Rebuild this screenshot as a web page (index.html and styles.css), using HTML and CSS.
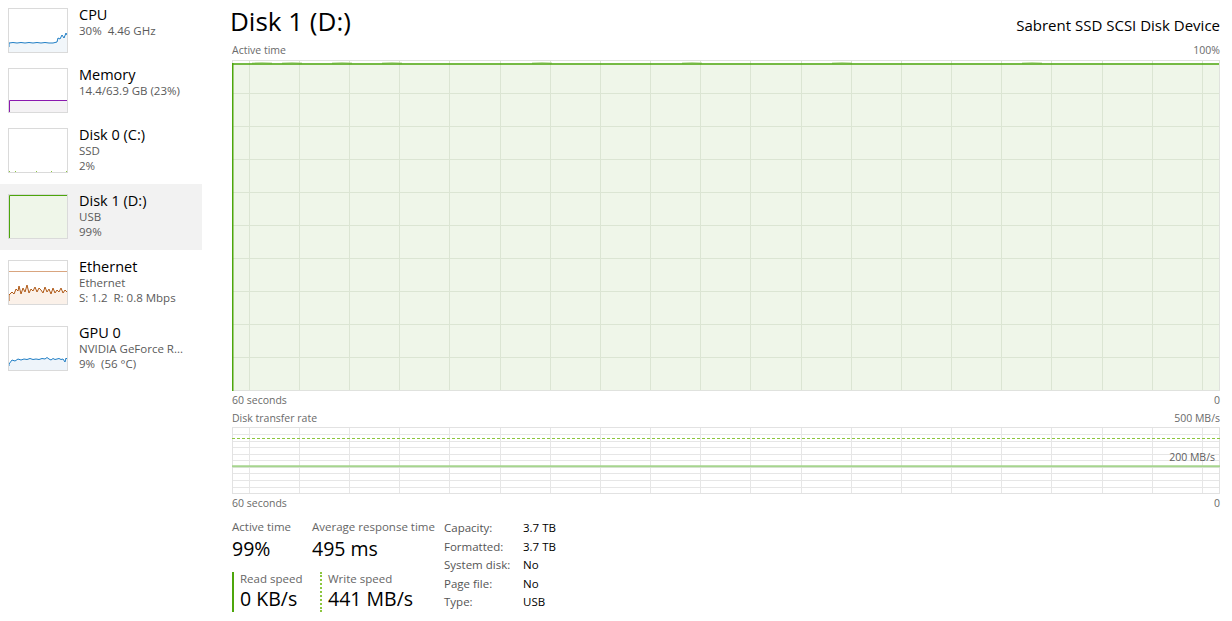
FILE: index.html
```html
<!DOCTYPE html>
<html>
<head>
<meta charset="utf-8">
<link rel="stylesheet" href="styles.css">
</head>
<body>
<div class="app">
  <nav class="sidebar">
    <div class="list">
      <div class="item">
        <div class="thumb">
          <svg width="58" height="43" viewBox="0 0 58 43"><polygon points="0,43 0,34 4,33.5 8,34 12,33.5 16,34 20,33.5 24,34 28,33.5 32,34 36,33.5 40,34 44,34 48,33 49,29 51,30 53,26 55,29 57,24 58,26 58,43" fill="#f1f6fa"/><polyline points="0,38 0,34 4,33.5 8,34 12,33.5 16,34 20,33.5 24,34 28,33.5 32,34 36,33.5 40,34 44,34 48,33 49,29 51,30 53,26 55,29 57,24 58,26" fill="none" stroke="#1f7ec5" stroke-width="1"/></svg>
        </div>
        <div class="text">
          <div class="name">CPU</div>
          <div class="sub">30%&nbsp; 4.46 GHz</div>
        </div>
      </div>
      <div class="item">
        <div class="thumb">
          <svg width="58" height="43" viewBox="0 0 58 43"><rect x="0" y="31" width="58" height="12" fill="#f4f2f4"/><polyline points="0.5,43 0.5,31.5 58,31.5" fill="none" stroke="#8b1aaf" stroke-width="1"/></svg>
        </div>
        <div class="text">
          <div class="name">Memory</div>
          <div class="sub">14.4/63.9 GB (23%)</div>
        </div>
      </div>
      <div class="item">
        <div class="thumb">
          <svg width="58" height="43" viewBox="0 0 58 43"><g fill="#8cc63f"><rect x="0" y="42" width="1" height="1"/><rect x="6" y="42" width="1" height="1"/><rect x="27" y="42" width="1" height="1"/><rect x="42" y="42" width="1" height="1"/><rect x="57" y="42" width="1" height="1"/></g></svg>
        </div>
        <div class="text">
          <div class="name">Disk 0 (C:)</div>
          <div class="sub">SSD</div>
          <div class="sub">2%</div>
        </div>
      </div>
      <div class="item selected">
        <div class="thumb">
          <svg width="58" height="43" viewBox="0 0 58 43"><rect x="0" y="0" width="58" height="43" fill="#eff6e9"/><polyline points="0.5,43 0.5,0.5 58,0.5" fill="none" stroke="#4da60c" stroke-width="1"/></svg>
        </div>
        <div class="text">
          <div class="name">Disk 1 (D:)</div>
          <div class="sub">USB</div>
          <div class="sub">99%</div>
        </div>
      </div>
      <div class="item">
        <div class="thumb">
          <svg width="58" height="43" viewBox="0 0 58 43"><line x1="0" y1="10.5" x2="58" y2="10.5" stroke="#d9a57f" stroke-width="1"/><polygon points="0,43 0,34 3,31 5,33 7,28 9,30 10,25 12,33 14,27 16,31 18,24 20,32 22,28 24,30 26,26 28,31 30,27 32,29 34,32 36,26 38,31 40,28 42,33 44,27 46,32 48,29 50,31 52,27 54,32 56,29 58,31 58,43" fill="#fbf1e9"/><polyline points="0,40 0,34 3,31 5,33 7,28 9,30 10,25 12,33 14,27 16,31 18,24 20,32 22,28 24,30 26,26 28,31 30,27 32,29 34,32 36,26 38,31 40,28 42,33 44,27 46,32 48,29 50,31 52,27 54,32 56,29 58,31" fill="none" stroke="#b05a17" stroke-width="1"/></svg>
        </div>
        <div class="text">
          <div class="name">Ethernet</div>
          <div class="sub">Ethernet</div>
          <div class="sub">S: 1.2&nbsp; R: 0.8 Mbps</div>
        </div>
      </div>
      <div class="item">
        <div class="thumb">
          <svg width="58" height="43" viewBox="0 0 58 43"><polygon points="0,43 0,37 3,33 6,34 9,32 12,33 15,32 18,32.5 21,31.5 24,32.5 27,32 30,32.5 33,31.5 36,32 38,30.5 40,32 42,33 44,31.5 46,32.5 48,32 50,31.5 52,32.5 54,32 56,35 57,31 58,32 58,43" fill="#eef4fa"/><polyline points="0,39 0,37 3,33 6,34 9,32 12,33 15,32 18,32.5 21,31.5 24,32.5 27,32 30,32.5 33,31.5 36,32 38,30.5 40,32 42,33 44,31.5 46,32.5 48,32 50,31.5 52,32.5 54,32 56,35 57,31 58,32" fill="none" stroke="#1f7ec5" stroke-width="1"/></svg>
        </div>
        <div class="text">
          <div class="name">GPU 0</div>
          <div class="sub">NVIDIA GeForce R...</div>
          <div class="sub">9%&nbsp; (56 °C)</div>
        </div>
      </div>
    </div>
  </nav>

  <main class="main">
    <header class="header">
      <h1 class="title">Disk 1 (D:)</h1>
      <div class="device">Sabrent SSD SCSI Disk Device</div>
    </header>

    <div class="axis-row top-label"><span>Active time</span><span>100%</span></div>
    <div class="graph">
      <svg width="988" height="331" viewBox="0 0 988 331">
        <rect x="0" y="0" width="988" height="331" fill="#ffffff"/>
        <polygon points="0,331 0,3.5 987,3.5 987,331" fill="#eff6e9"/>
        <path d="M17.5 0V331M67.5 0V331M117.5 0V331M167.5 0V331M217.5 0V331M268.5 0V331M318.5 0V331M368.5 0V331M418.5 0V331M468.5 0V331M518.5 0V331M569.5 0V331M619.5 0V331M669.5 0V331M719.5 0V331M769.5 0V331M819.5 0V331M870.5 0V331M920.5 0V331M970.5 0V331" stroke="#dbe5d3" stroke-width="1" fill="none"/>
        <path d="M0 33.5H988M0 66.5H988M0 99.5H988M0 132.5H988M0 165.5H988M0 198.5H988M0 231.5H988M0 264.5H988M0 297.5H988" stroke="#dbe5d3" stroke-width="1" fill="none"/>
        <rect x="0.5" y="0.5" width="987" height="330" fill="none" stroke="#e0e2de" stroke-width="1"/>
        <g fill="none" stroke="#b8da9c" stroke-width="1.2">
          <path d="M20 3.2Q30 1.8 40 3.2M50 3.2Q60 1.8 70 3.2M100 3.2Q110 1.8 120 3.2M150 3.2Q160 1.8 170 3.2M300 3.2Q310 1.8 320 3.2M450 3.2Q460 1.8 470 3.2M600 3.2Q610 1.8 620 3.2M790 3.2Q800 1.8 810 3.2"/>
        </g>
        <line x1="0" y1="4" x2="987" y2="4" stroke="#4da60c" stroke-width="1.5"/>
        <line x1="0.75" y1="3" x2="0.75" y2="331" stroke="#4da60c" stroke-width="1.5"/>
      </svg>
    </div>
    <div class="axis-row"><span>60 seconds</span><span>0</span></div>

    <div class="axis-row"><span>Disk transfer rate</span><span>500 MB/s</span></div>
    <div class="graph rate">
      <svg width="988" height="67" viewBox="0 0 988 67">
        <rect x="0" y="0" width="988" height="67" fill="#ffffff"/>
        <path d="M17.5 0V67M67.5 0V67M117.5 0V67M167.5 0V67M217.5 0V67M268.5 0V67M318.5 0V67M368.5 0V67M418.5 0V67M468.5 0V67M518.5 0V67M569.5 0V67M619.5 0V67M669.5 0V67M719.5 0V67M769.5 0V67M819.5 0V67M870.5 0V67M920.5 0V67M970.5 0V67" stroke="#e6e6e6" stroke-width="1" fill="none"/>
        <path d="M0 7.5H988M0 14.5H988M0 20.5H988M0 27.5H988M0 33.5H988M0 40.5H988M0 46.5H988M0 53.5H988M0 60.5H988" stroke="#e6e6e6" stroke-width="1" fill="none"/>
        <rect x="0.5" y="0.5" width="987" height="66" fill="none" stroke="#e2e2e2" stroke-width="1"/>
        <line x1="0" y1="11.5" x2="988" y2="11.5" stroke="#8cc63f" stroke-width="1" stroke-dasharray="3 2"/>
        <line x1="0" y1="39.3" x2="988" y2="39.3" stroke="#a6d58e" stroke-width="2"/>
      </svg>
      <span class="rate-mark">200 MB/s</span>
    </div>
    <div class="axis-row"><span>60 seconds</span><span>0</span></div>

    <section class="stats">
      <div class="stat-grid">
        <div class="stat-row">
          <div class="stat w80">
            <div class="label">Active time</div>
            <div class="value">99%</div>
          </div>
          <div class="stat">
            <div class="label">Average response time</div>
            <div class="value">495 ms</div>
          </div>
        </div>
        <div class="stat-row second">
          <div class="stat speed read w88">
            <div class="label">Read speed</div>
            <div class="value">0 KB/s</div>
          </div>
          <div class="stat speed write">
            <div class="label">Write speed</div>
            <div class="value">441 MB/s</div>
          </div>
        </div>
      </div>
      <dl class="info">
        <dt>Capacity:</dt><dd>3.7 TB</dd>
        <dt>Formatted:</dt><dd>3.7 TB</dd>
        <dt>System disk:</dt><dd>No</dd>
        <dt>Page file:</dt><dd>No</dd>
        <dt>Type:</dt><dd>USB</dd>
      </dl>
    </section>
  </main>
</div>
</body>
</html>
```

FILE: styles.css
```css
* { box-sizing: border-box; }
html, body { margin: 0; padding: 0; background: #ffffff; }
body {
  font-family: "Open Sans", "Noto Sans", "Liberation Sans", sans-serif;
  color: #000;
  width: 1232px;
  height: 621px;
  overflow: hidden;
}
.app { display: flex; height: 621px; }

/* Sidebar */
.sidebar { width: 202px; flex: none; overflow: hidden; }
.list { margin-top: -2px; }
.item {
  display: flex;
  align-items: flex-start;
  padding: 10px 0 5px 8px;
}
.item.selected { background: #f2f2f2; }
.thumb {
  width: 60px;
  height: 45px;
  border: 1px solid #dadada;
  background: #fff;
  flex: none;
  line-height: 0;
}
.thumb svg { display: block; }
.text { margin-left: 11px; margin-top: -2px; padding-bottom: 6px; }
.name { font-size: 14.5px; line-height: 17px; color: #000; white-space: nowrap; }
.sub { font-size: 11.5px; line-height: 15px; color: #5a5a5a; white-space: nowrap; }

/* Main */
.main { flex: 1; padding: 0 12px 0 30px; }
.header {
  display: flex;
  justify-content: space-between;
  align-items: baseline;
  height: 42px;
}
.title {
  margin: 0 0 0 -2px;
  font-weight: 400;
  font-size: 26px;
  line-height: 42px;
}
.device { font-size: 15px; }

.axis-row {
  display: flex;
  justify-content: space-between;
  font-size: 10.5px;
  line-height: 18px;
  height: 18px;
  color: #6a6a6a;
}
.axis-row.top-label { line-height: 17px; height: 18px; }
.graph { line-height: 0; position: relative; width: 988px; }
.graph svg { display: block; }
.rate-mark {
  position: absolute;
  right: 5px;
  top: 23px;
  font-size: 10.5px;
  line-height: 14px;
  color: #5e5e5e;
}

/* Stats */
.stats { display: flex; margin-top: 7px; }
.stat-grid { width: 212px; flex: none; }
.stat-row { display: flex; }
.stat-row.second { margin-top: 9px; }
.w80 { width: 80px; flex: none; }
.w88 { width: 88px; flex: none; }
.label { font-size: 11.5px; line-height: 16px; color: #666; white-space: nowrap; }
.value { font-size: 19.5px; line-height: 28px; white-space: nowrap; }
.speed { height: 40px; padding-left: 6px; }
.speed .label { line-height: 14px; }
.speed .value { line-height: 26px; }
.read { border-left: 2px solid #4da60c; }
.write { border-left: 2px dotted #8cc63f; }

.info {
  margin: 0;
  display: grid;
  grid-template-columns: 79px auto;
  font-size: 11.5px;
  line-height: 18px;
}
.info dt { color: #555; }
.info dd { margin: 0; color: #000; }
```
